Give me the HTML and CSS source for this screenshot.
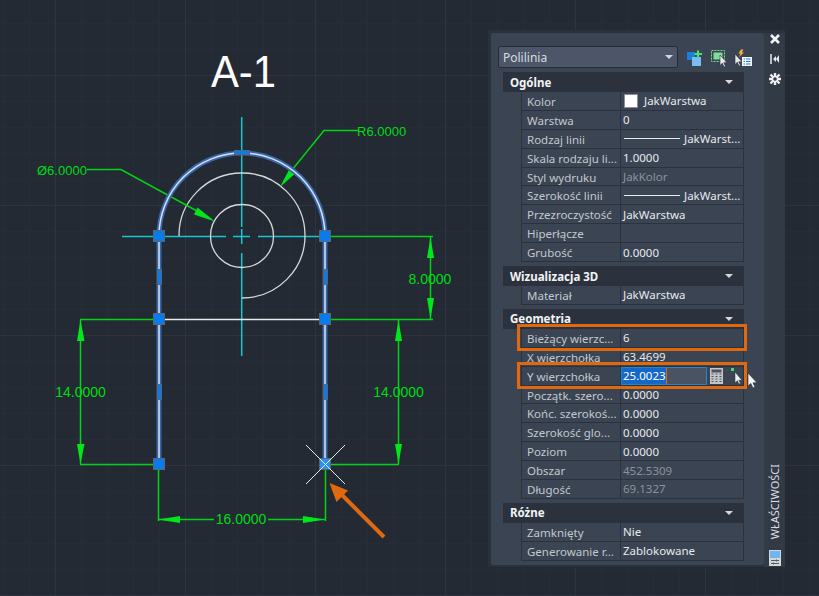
FILE: index.html
```html
<!DOCTYPE html>
<html lang="pl">
<head>
<meta charset="utf-8">
<title>Polilinia - Właściwości</title>
<link rel="stylesheet" href="styles.css">
</head>
<body>
<div class="canvas">
  <svg class="drawing" width="819" height="596" viewBox="0 0 819 596">
    <text class="title" x="211" y="87" textLength="65" lengthAdjust="spacingAndGlyphs">A-1</text>

    <g class="center">
      <path d="M122 236.500H226M233 236.500H250M258 236.500H325M241.700 117V227M241.700 229V244M241.700 253V356"/>
    </g>

    <g class="thin">
      <circle cx="242" cy="236" r="31.500"/>
      <path d="M179 236A63 62.500 0 1 1 242 298"/>
    </g>

    <g class="dim">
      <path d="M87 169.500H121L197 211"/>
      <path d="M358 130.500H324L292 170"/>
      <path d="M331 236.500H433M331 319.500H433M430.500 236V319"/>
      <path d="M80 319.500H153M80 464.500H153M80.500 320V464"/>
      <path d="M331 464.500H399M398.500 320V464"/>
      <path d="M158.500 470V521M325.500 470V521M158 519.500H214M268 519.500H325"/>
    </g>
    <g class="head">
      <polygon points="215,221.600 194,214.500 197.500,207.500"/>
      <polygon points="280,187 290.500,167 297,172"/>
      <polygon points="430.500,237 427,258 434,258"/>
      <polygon points="430.500,319 427,298 434,298"/>
      <polygon points="80.500,320 77,341 84.500,341"/>
      <polygon points="80.500,464 77,444 84.500,444"/>
      <polygon points="398.500,320 395,341 402,341"/>
      <polygon points="398.500,464 395,444 402,444"/>
      <polygon points="158,519.500 180,516 180,523"/>
      <polygon points="325,519.500 303,516 303,523"/>
    </g>
    <g class="dimtext">
      <text class="small" x="357" y="136">R6.0000</text>
      <text class="small" x="37" y="175">Ø6.0000</text>
      <text x="430" y="284" text-anchor="middle">8.0000</text>
      <text x="80.500" y="397" text-anchor="middle">14.0000</text>
      <text x="398.500" y="397" text-anchor="middle">14.0000</text>
      <text x="241" y="524" text-anchor="middle">16.0000</text>
    </g>

    <path class="glow" d="M159 464V236A83 83 0 0 1 325 236V464"/>
    <path class="core" d="M159 464V236A83 83 0 0 1 325 236V464"/>
    <path class="mid" d="M159 319.500H325"/>

    <g class="grip">
      <rect x="153.500" y="230.500" width="11" height="11"/>
      <rect x="319.500" y="230.500" width="11" height="11"/>
      <rect x="153.500" y="313.500" width="11" height="11"/>
      <rect x="319.500" y="313.500" width="11" height="11"/>
      <rect x="153.500" y="458.500" width="11" height="11"/>
      <rect x="234.500" y="150.500" width="15" height="4"/>
      <rect x="157.500" y="269.500" width="4" height="15"/>
      <rect x="323.500" y="269.500" width="4" height="15"/>
      <rect x="157.500" y="384.500" width="4" height="15"/>
      <rect x="323.500" y="384.500" width="4" height="15"/>
    </g>
    <rect class="grip-hot" x="319.500" y="458.500" width="11" height="11"/>
    <path class="cross" d="M306 445L345 484M345 445L306 484"/>

    <path class="pointer-line" d="M384 537L340 493"/>
    <polygon class="pointer-head" points="329.500,483 336.500,502 348,490.500"/>
  </svg>

  <div class="palette">
    <div class="main">
      <div class="toolbar">
        <div class="select"><span>Polilinia</span><i class="caret"></i></div>
        <div class="tools">
          <svg width="68" height="20" viewBox="0 0 68 20">
            <rect x="2" y="4" width="8" height="8" fill="#1c7fd8"/>
            <rect x="7" y="9" width="9" height="9" fill="#79bdf2"/>
            <path d="M13 2.500V9.500M9.500 6H17" stroke="#4fdc7e" stroke-width="2.200" fill="none"/>
            <rect x="26.500" y="2.500" width="13" height="11" fill="none" stroke="#6fe08f" stroke-dasharray="2 1"/>
            <rect x="28.500" y="4.500" width="9" height="7" fill="#7fdc9c"/>
            <path d="M35 7V17.500L37.300 15.200L39 19L40.500 18.300L38.800 14.700H42Z" fill="#e8e8e8" stroke="#2a303a" stroke-width=".6"/>
            <path d="M50 6V16.500L52.300 14.200L54 18L55.500 17.300L53.800 13.700H57Z" fill="#e8e8e8" stroke="#2a303a" stroke-width=".6"/>
            <path d="M56 1.500L53.500 5.500H55.500L54 9L59 4.500H56.800L58.500 1.500Z" fill="#f0b73a"/>
            <rect x="57" y="9" width="10" height="9" fill="#f4f6f8"/>
            <path d="M58.500 11H60M61 11H65.500M58.500 13.500H60M61 13.500H65.500M58.500 16H60M61 16H65.500" stroke="#1c7fd8" fill="none"/>
          </svg>
        </div>
      </div>

      <section class="group">
        <h2 class="group-head">Ogólne<i class="caret"></i></h2>
        <div class="row"><div class="label">Kolor</div><div class="value"><i class="swatch"></i>JakWarstwa</div></div>
        <div class="row"><div class="label">Warstwa</div><div class="value">0</div></div>
        <div class="row"><div class="label">Rodzaj linii</div><div class="value"><i class="sample"></i>JakWarst...</div></div>
        <div class="row"><div class="label">Skala rodzaju li...</div><div class="value">1.0000</div></div>
        <div class="row"><div class="label">Styl wydruku</div><div class="value off">JakKolor</div></div>
        <div class="row"><div class="label">Szerokość linii</div><div class="value"><i class="sample"></i>JakWarst...</div></div>
        <div class="row"><div class="label">Przezroczystość</div><div class="value">JakWarstwa</div></div>
        <div class="row"><div class="label">Hiperłącze</div><div class="value"></div></div>
        <div class="row"><div class="label">Grubość</div><div class="value">0.0000</div></div>
      </section>

      <section class="group">
        <h2 class="group-head">Wizualizacja 3D<i class="caret"></i></h2>
        <div class="row"><div class="label">Materiał</div><div class="value">JakWarstwa</div></div>
      </section>

      <section class="group">
        <h2 class="group-head">Geometria<i class="caret"></i></h2>
        <div class="row"><div class="label">Bieżący wierzc...</div><div class="value">6</div></div>
        <div class="row"><div class="label">X wierzchołka</div><div class="value">63.4699</div></div>
        <div class="row">
          <div class="label">Y wierzchołka</div>
          <div class="value edit">
            <div class="input"><span class="picked">25.0023</span><i class="text-caret"></i></div>
            <svg class="calc" width="13" height="16" viewBox="0 0 13 16">
              <rect width="13" height="16" fill="#c4c6c8"/>
              <rect x="1.500" y="1.500" width="10" height="3" fill="#4a5260"/>
              <path d="M1.500 6H3.500M5.500 6H7.500M9.500 6H11.500M1.500 8.500H3.500M5.500 8.500H7.500M9.500 8.500H11.500M1.500 11H3.500M5.500 11H7.500M9.500 11H11.500M1.500 13.500H3.500M5.500 13.500H7.500M9.500 13.500H11.500" stroke="#4a5260" stroke-width="1" fill="none"/>
            </svg>
            <svg class="pick" width="18" height="18" viewBox="0 0 18 18">
              <rect x="1" y="1" width="3" height="3" fill="#3fd97a"/>
              <path d="M5 5V16L7.300 13.700L9 17L10.500 16.300L8.800 13.200H12Z" fill="#eceef0" stroke="#2a303a" stroke-width=".5"/>
            </svg>
          </div>
        </div>
        <div class="row"><div class="label">Początk. szero...</div><div class="value">0.0000</div></div>
        <div class="row"><div class="label">Końc. szerokoś...</div><div class="value">0.0000</div></div>
        <div class="row"><div class="label">Szerokość glo...</div><div class="value">0.0000</div></div>
        <div class="row"><div class="label">Poziom</div><div class="value">0.0000</div></div>
        <div class="row"><div class="label">Obszar</div><div class="value off">452.5309</div></div>
        <div class="row"><div class="label">Długość</div><div class="value off">69.1327</div></div>
      </section>

      <section class="group">
        <h2 class="group-head">Różne<i class="caret"></i></h2>
        <div class="row"><div class="label">Zamknięty</div><div class="value">Nie</div></div>
        <div class="row"><div class="label">Generowanie r...</div><div class="value">Zablokowane</div></div>
      </section>
    </div>

    <aside class="strip">
      <svg width="12" height="12" viewBox="0 0 12 12"><path d="M2 2L10 10M10 2L2 10" stroke="#f2f4f6" stroke-width="2.600" fill="none"/></svg>
      <svg width="10" height="10" viewBox="0 0 10 10"><path d="M1 0V10" stroke="#e8eaec" stroke-width="1.500"/><path d="M3 5L6 2V8ZM9 1V9L6 5Z" fill="#e8eaec"/></svg>
      <svg width="12" height="12" viewBox="0 0 12 12"><path d="M6 0V12M0 6H12M1.500 1.500L10.500 10.500M10.500 1.500L1.500 10.500" stroke="#eef0f2" stroke-width="2.400" fill="none"/><rect x="3" y="3" width="6" height="6" fill="#eef0f2"/><circle cx="6" cy="6" r="1.800" fill="#323a46"/></svg>
      <div class="strip-title">WŁAŚCIWOŚCI</div>
      <svg class="strip-icon" width="12" height="16" viewBox="0 0 12 16">
        <rect width="12" height="16" fill="#d4d6d8"/>
        <rect x="1" y="1" width="10" height="7" fill="#6fb6f0"/>
        <path d="M2 10.500H10M2 13.500H10" stroke="#555c66" fill="none"/>
        <path d="M7.500 9.500V11.500M4.500 12.500V14.500" stroke="#555c66" fill="none"/>
      </svg>
    </aside>

    <div class="mark mark-a"></div>
    <div class="mark mark-b"></div>
    <svg class="mouse" width="12" height="16" viewBox="0 0 12 16">
      <path d="M1 0V13L3.800 10.400L6 15L8 14L6 9.800H10Z" fill="#f4f5f6" stroke="#222830" stroke-width=".6"/>
    </svg>
  </div>
</div>
</body>
</html>
```

FILE: styles.css
```css
* { box-sizing: border-box; }

html, body {
  margin: 0;
  padding: 0;
}

body {
  background: #232a33;
  font-family: "Noto Sans", "Open Sans", sans-serif;
}

.canvas {
  position: relative;
  width: 819px;
  height: 596px;
  overflow: hidden;
  background-color: #232a33;
  background-image:
    linear-gradient(#2d3441 1px, transparent 1px),
    linear-gradient(90deg, #2d3441 1px, transparent 1px),
    linear-gradient(#262d38 1px, transparent 1px),
    linear-gradient(90deg, #262d38 1px, transparent 1px);
  background-size: 130px 130px, 130px 130px, 26px 26px, 26px 26px;
  background-position: 0 75px, 55px 0, 0 23px, 3px 0;
}

/* drawing */
.drawing {
  position: absolute;
  left: 0;
  top: 0;
}

.drawing path,
.drawing circle { fill: none; }

.title {
  font-family: "Liberation Sans", Arial, sans-serif;
  font-size: 44px;
  fill: #ffffff;
}

.center path { stroke: #12c8d4; stroke-width: 1.500; }
.thin circle, .thin path { stroke: #d6d8da; stroke-width: 1.300; }
.dim path { stroke: #00d414; stroke-width: 1.500; }
.head polygon { fill: #00e81a; }

.dimtext text {
  font-family: "Liberation Sans", Arial, sans-serif;
  font-size: 14px;
  fill: #00dc14;
}
.dimtext .small { font-size: 13px; }

.drawing .glow { stroke: #3a66a8; stroke-width: 5; }
.drawing .core { stroke: #d4e2f6; stroke-width: 1.500; }
.drawing .mid { stroke: #e8eaec; stroke-width: 1.500; }

.grip rect { fill: #0a7bec; stroke: #5c6470; stroke-width: 1; }
.grip-hot { fill: #2a92f4; stroke: #5c6470; stroke-width: 1; }
.drawing .cross { stroke: #e8eaee; stroke-width: 1; }

.drawing .pointer-line { stroke: #e0690f; stroke-width: 4; }
.pointer-head { fill: #e0690f; }

/* properties palette */
.palette {
  position: absolute;
  left: 488px;
  top: 30px;
  width: 297px;
  height: 537px;
  display: flex;
  padding: 3px 0 0 3px;
  background: #2a313c;
}

.main {
  flex: 0 0 273px;
  min-width: 0;
  margin-bottom: 2px;
  padding: 13px 20px 0 12px;
  background: #3b4452;
  border-radius: 2px;
}

.toolbar {
  display: flex;
  align-items: center;
  height: 22px;
  margin: 0 -20px 4px -5px;
}

.select {
  flex: 0 0 180px;
  height: 22px;
  display: flex;
  align-items: center;
  justify-content: space-between;
  padding: 0 4px;
  background: #4c5668;
  border: 1px solid #262c36;
  border-radius: 2px;
  color: #d6dbe2;
  font-size: 12px;
}

.tools {
  display: flex;
  margin: 2px 0 0 7px;
}

.caret {
  display: block;
  width: 0;
  height: 0;
  border-left: 4.500px solid transparent;
  border-right: 4.500px solid transparent;
  border-top: 4.500px solid #d4d8de;
}

.group { margin-bottom: 4px; }

.group-head {
  display: flex;
  align-items: center;
  justify-content: space-between;
  height: 20px;
  margin: 0;
  padding: 0 11px 0 7px;
  background: #2b323d;
  color: #f2f4f6;
  font-size: 11.500px;
  font-weight: 700;
}

.row {
  display: grid;
  grid-template-columns: 99px minmax(0, 1fr);
  height: 18.900px;
  margin-left: 18px;
  border-left: 1px solid #2b323d;
  border-right: 1px solid #2b323d;
  border-bottom: 1px solid #2b323d;
  font-size: 11.500px;
  line-height: 17px;
}

.label {
  padding: 1px 0 0 5px;
  border-right: 1px solid #2b323d;
  color: #c2c8d0;
  white-space: nowrap;
  overflow: hidden;
}

.value {
  display: flex;
  align-items: center;
  padding-left: 2px;
  color: #e6eaee;
  white-space: nowrap;
  overflow: hidden;
}

.value.off { color: #8a929e; }

.swatch {
  flex: none;
  width: 14px;
  height: 14px;
  margin: 0 6px 0 1px;
  background: #ffffff;
  border: 1px solid #8a8f96;
}

.sample {
  flex: none;
  width: 56px;
  height: 1px;
  margin: 0 4px 0 1px;
  background: #e8eaec;
}

.edit { padding-left: 0; overflow: visible; }

.input {
  flex: none;
  display: flex;
  align-items: center;
  width: 86px;
  height: 18px;
  background: #4a5364;
  border: 1px solid #1e88c8;
}

.picked {
  padding-left: 1px;
  background: #1668c8;
  color: #ffffff;
  line-height: 16px;
}

.text-caret {
  width: 1px;
  height: 16px;
  background: #e0690f;
}

.calc { flex: none; margin-left: 3px; }
.pick { flex: none; margin-left: 7px; }

.strip {
  flex: 1;
  display: flex;
  flex-direction: column;
  align-items: center;
  gap: 9px;
  padding-bottom: 1px;
  background: #323a46;
}

.strip svg { flex: none; }

.strip-title {
  margin-top: auto;
  writing-mode: vertical-rl;
  transform: rotate(180deg);
  color: #d8dde4;
  font-size: 11px;
  line-height: 12px;
}

.strip-icon { margin-top: 2px; }

.mark {
  position: absolute;
  left: 29px;
  width: 230px;
  height: 27px;
  border: 3px solid #e0690f;
}

.mark-a { top: 294px; }
.mark-b { top: 332px; }

.mouse {
  position: absolute;
  left: 259px;
  top: 343px;
}
```
